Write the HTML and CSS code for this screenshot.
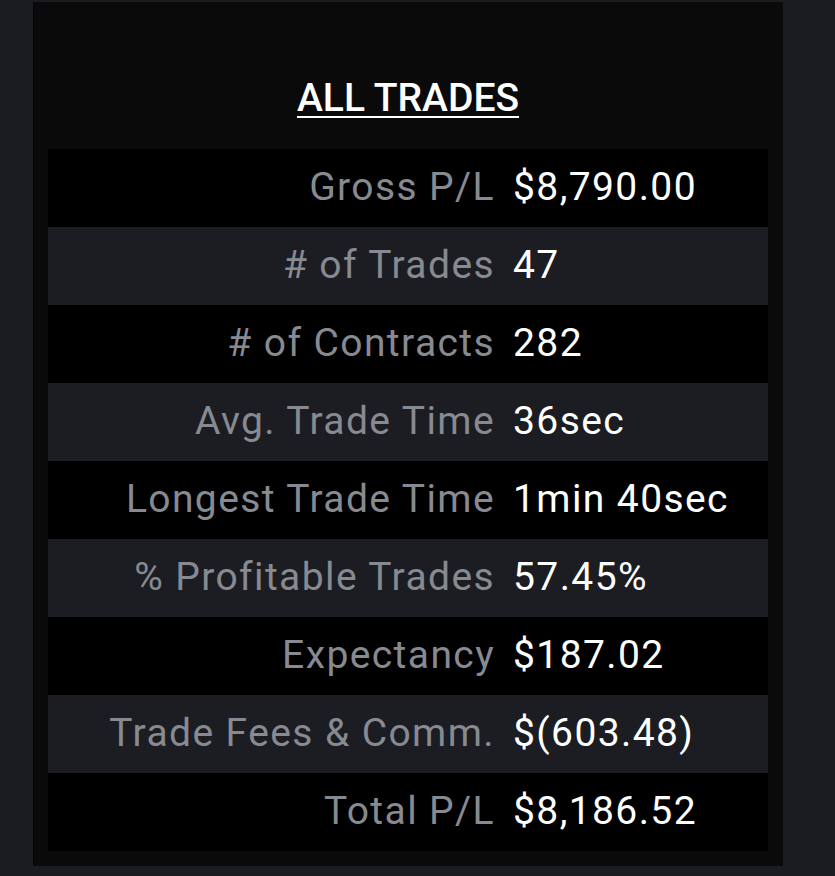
FILE: index.html
```html
<!DOCTYPE html>
<html lang="en">

<head>
    <meta charset="UTF-8">
    <meta name="viewport" content="width=device-width, initial-scale=1.0">
    <title>All Trades</title>
    <link rel="stylesheet" href="styles.css">
</head>

<body>
    <section class="panel">
        <h2 class="title">ALL TRADES</h2>
        <div class="stats">
            <div class="row"><span class="label">Gross P/L</span><span class="value">$8,790.00</span></div>
            <div class="row"><span class="label"># of Trades</span><span class="value">47</span></div>
            <div class="row"><span class="label"># of Contracts</span><span class="value">282</span></div>
            <div class="row"><span class="label">Avg. Trade Time</span><span class="value">36sec</span></div>
            <div class="row"><span class="label">Longest Trade Time</span><span class="value">1min 40sec</span></div>
            <div class="row"><span class="label">% Profitable Trades</span><span class="value">57.45%</span></div>
            <div class="row"><span class="label">Expectancy</span><span class="value">$187.02</span></div>
            <div class="row"><span class="label">Trade Fees &amp; Comm.</span><span class="value">$(603.48)</span></div>
            <div class="row"><span class="label">Total P/L</span><span class="value">$8,186.52</span></div>
        </div>
    </section>
</body>

</html>
```

FILE: styles.css
```css
html {
    font-family: Roboto, 'Noto Sans', sans-serif;
    background: #1b1c21;
}

body {
    margin: 0;
    padding: 2px 0 10px 33px;
}

.panel {
    width: 750px;
    height: 864px;
    box-sizing: border-box;
    background: #0a0a0a;
    border-left: 1px solid #060606;
    padding: 0 15px 15px 14px;
    display: flex;
    flex-direction: column;
    justify-content: flex-end;
}

.title {
    margin: 0 0 28px;
    text-align: center;
    color: #fff;
    font-size: 39px;
    font-weight: 500;
    text-decoration: underline;
    text-decoration-thickness: 2px;
    text-underline-offset: 5px;
}

.row {
    height: 78px;
    box-sizing: border-box;
    padding-bottom: 3px;
    display: flex;
    align-items: center;
    font-size: 39px;
    letter-spacing: 1.4px;
    background: #000;
}

.row:nth-child(even) {
    background: #1c1d22;
}

.label {
    width: 447px;
    text-align: right;
    color: #878a91;
}

.value {
    padding-left: 18px;
    color: #fff;
}
```
